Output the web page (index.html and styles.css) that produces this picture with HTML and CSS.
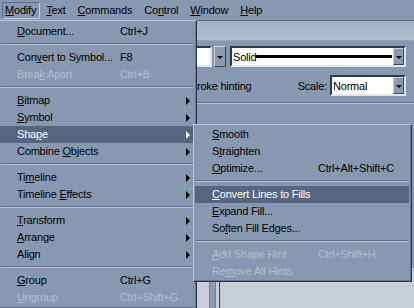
FILE: index.html
```html
<!DOCTYPE html>
<html>
<head>
    <title>Modify menu</title>
    <link rel="stylesheet" href="styles.css">
</head>
<body>
    <div class="app">
        <div class="menubar">
            <span class="mb-item open"><u>M</u>odify</span>
            <span class="mb-item"><u>T</u>ext</span>
            <span class="mb-item"><u>C</u>ommands</span>
            <span class="mb-item">Co<u>n</u>trol</span>
            <span class="mb-item"><u>W</u>indow</span>
            <span class="mb-item"><u>H</u>elp</span>
        </div>
        <div class="band"></div>

        <div class="panel">
            <div class="prop-row first">
                <div class="field small"></div>
                <div class="drop-btn lone"></div>
                <div class="field wide">
                    <span class="field-text">Solid</span>
                    <span class="stroke-line"></span>
                    <span class="drop-btn"></span>
                </div>
            </div>
            <div class="prop-row second">
                <span class="hint">Stroke hinting</span>
                <span class="scale-label">Scale:</span>
                <div class="field narrow">
                    <span class="field-text">Normal</span>
                    <span class="drop-btn"></span>
                </div>
            </div>
            <div class="panel-sep"></div>
        </div>

        <div class="stage">
            <div class="stage-bar"></div>
            <div class="playhead"></div>
        </div>
    </div>

    <div class="menu main-menu">
        <div class="item"><span><u>D</u>ocument...</span><span>Ctrl+J</span></div>
        <div class="sep"></div>
        <div class="item"><span>Con<u>v</u>ert to Symbol...</span><span>F8</span></div>
        <div class="item disabled"><span>Brea<u>k</u> Apart</span><span>Ctrl+B</span></div>
        <div class="sep"></div>
        <div class="item"><span><u>B</u>itmap</span><span></span><span class="arrow"></span></div>
        <div class="item"><span><u>S</u>ymbol</span><span></span><span class="arrow"></span></div>
        <div class="item active"><span>Sha<u>p</u>e</span><span></span><span class="arrow"></span></div>
        <div class="item"><span>Combine <u>O</u>bjects</span><span></span><span class="arrow"></span></div>
        <div class="sep"></div>
        <div class="item"><span>Ti<u>m</u>eline</span><span></span><span class="arrow"></span></div>
        <div class="item"><span>Timeline <u>E</u>ffects</span><span></span><span class="arrow"></span></div>
        <div class="sep"></div>
        <div class="item"><span><u>T</u>ransform</span><span></span><span class="arrow"></span></div>
        <div class="item"><span><u>A</u>rrange</span><span></span><span class="arrow"></span></div>
        <div class="item"><span>Ali<u>g</u>n</span><span></span><span class="arrow"></span></div>
        <div class="sep"></div>
        <div class="item"><span><u>G</u>roup</span><span>Ctrl+G</span></div>
        <div class="item disabled"><span><u>U</u>ngroup</span><span>Ctrl+Shift+G</span></div>
    </div>

    <div class="menu sub-menu">
        <div class="item"><span><u>S</u>mooth</span><span></span></div>
        <div class="item"><span>S<u>t</u>raighten</span><span></span></div>
        <div class="item"><span><u>O</u>ptimize...</span><span>Ctrl+Alt+Shift+C</span></div>
        <div class="sep"></div>
        <div class="item active"><span><u>C</u>onvert Lines to Fills</span><span></span></div>
        <div class="item"><span><u>E</u>xpand Fill...</span><span></span></div>
        <div class="item"><span>So<u>f</u>ten Fill Edges...</span><span></span></div>
        <div class="sep"></div>
        <div class="item disabled"><span><u>A</u>dd Shape Hint</span><span>Ctrl+Shift+H</span></div>
        <div class="item disabled"><span>Re<u>m</u>ove All Hints</span><span></span></div>
    </div>
</body>
</html>
```

FILE: styles.css
```css
body {
    margin: 0;
    width: 414px;
    height: 308px;
    overflow: hidden;
    position: relative;
    font-family: "Liberation Sans", Arial, sans-serif;
    font-size: 11px;
    letter-spacing: -0.2px;
    color: #000;
    background-color: #8799b1;
}

.app {
    display: flex;
    flex-direction: column;
    height: 308px;
}

/* menu bar */

.menubar {
    height: 20px;
    display: flex;
    align-items: flex-start;
    padding-top: 2px;
    box-sizing: border-box;
}

.mb-item {
    line-height: 17px;
    padding: 0 6px;
}

.mb-item.open {
    margin-left: 2px;
    padding: 0 3px 0 2px;
    line-height: 15px;
    border: 1px solid;
    border-color: #5b6c83 #c3cedb #c3cedb #5b6c83;
}

.band {
    height: 21px;
    box-sizing: border-box;
    border-top: 1px solid #5a6a80;
    border-bottom: 1px solid #93a4ba;
    background: linear-gradient(#a2b3c6, #aebdce);
}

/* property panel */

.panel {
    flex: 1;
}

.prop-row {
    display: flex;
    align-items: center;
    height: 21px;
    padding-right: 8px;
}

.prop-row.first {
    margin-top: 5px;
    justify-content: flex-end;
}

.prop-row.second {
    margin-top: 8px;
}

.hint {
    margin-left: 187px;
}

.scale-label {
    margin-left: auto;
    margin-right: 3px;
}

.field {
    display: flex;
    align-items: center;
    height: 21px;
    box-sizing: border-box;
    background-color: #fff;
    border: 2px solid;
    border-color: #2f3a48 #dfe5ec #dfe5ec #2f3a48;
}

.field.small {
    width: 30px;
}

.field.wide {
    width: 176px;
}

.field.narrow {
    width: 76px;
}

.field-text {
    padding-left: 1px;
}

.field.narrow .field-text {
    flex: 1;
}

.stroke-line {
    flex: 1;
    height: 3px;
    background-color: #000;
    margin-right: 1px;
}

.drop-btn {
    position: relative;
    width: 11px;
    height: 17px;
    box-sizing: border-box;
    background-color: #8a9bb2;
    border: 1px solid;
    border-color: #c5d0dc #3d4959 #3d4959 #c5d0dc;
}

.drop-btn::after {
    content: "";
    position: absolute;
    left: 2px;
    top: 7px;
    border-top: 3px solid #000;
    border-left: 3px solid transparent;
    border-right: 3px solid transparent;
}

.drop-btn.lone {
    width: 12px;
    height: 21px;
    margin: 0 4px 0 2px;
}

.drop-btn.lone::after {
    top: 9px;
}

.panel-sep {
    margin-top: 6px;
    border-top: 1px solid #5d6e85;
    border-bottom: 1px solid #b7c4d3;
}

/* stage peeking under the menus */

.stage {
    height: 40px;
    display: flex;
    padding-left: 209px;
    background-color: #c6ced8;
}

.stage-bar {
    width: 5px;
    background-color: #8a9bb2;
    border-left: 1px solid #6f8097;
    border-right: 1px solid #6f8097;
}

.playhead {
    width: 1px;
    margin-left: 3px;
    background-color: #d40000;
}

/* dropdown menus */

.menu {
    position: absolute;
    box-sizing: border-box;
    background-color: #8799b1;
    border: 1px solid;
    border-color: #bac6d4 #2c3745 #2c3745 #bac6d4;
    box-shadow: inset -1px -1px 0 #65768c;
}

.main-menu {
    left: -1px;
    top: 20px;
    width: 198px;
    padding: 2px 2px 2px 0;
}

.sub-menu {
    left: 193px;
    top: 124px;
    width: 219px;
    padding: 1px 2px 1px 1px;
}

.item {
    display: grid;
    height: 17px;
    line-height: 17px;
    padding-left: 17px;
    white-space: nowrap;
}

.main-menu .item {
    grid-template-columns: 103px 1fr 4px;
    padding-right: 4px;
}

.sub-menu .item {
    grid-template-columns: 106px 1fr;
}

.item.active {
    background-color: #55677f;
    color: #fff;
}

.item.disabled {
    color: #b2bece;
}

.arrow {
    align-self: center;
    width: 0;
    height: 0;
    border-left: 4px solid #000;
    border-top: 4px solid transparent;
    border-bottom: 4px solid transparent;
}

.item.active .arrow {
    border-left-color: #fff;
}

.sep {
    margin: 3px 1px 4px;
    border-top: 1px solid #5d6e85;
    border-bottom: 1px solid #b7c4d3;
}
```
